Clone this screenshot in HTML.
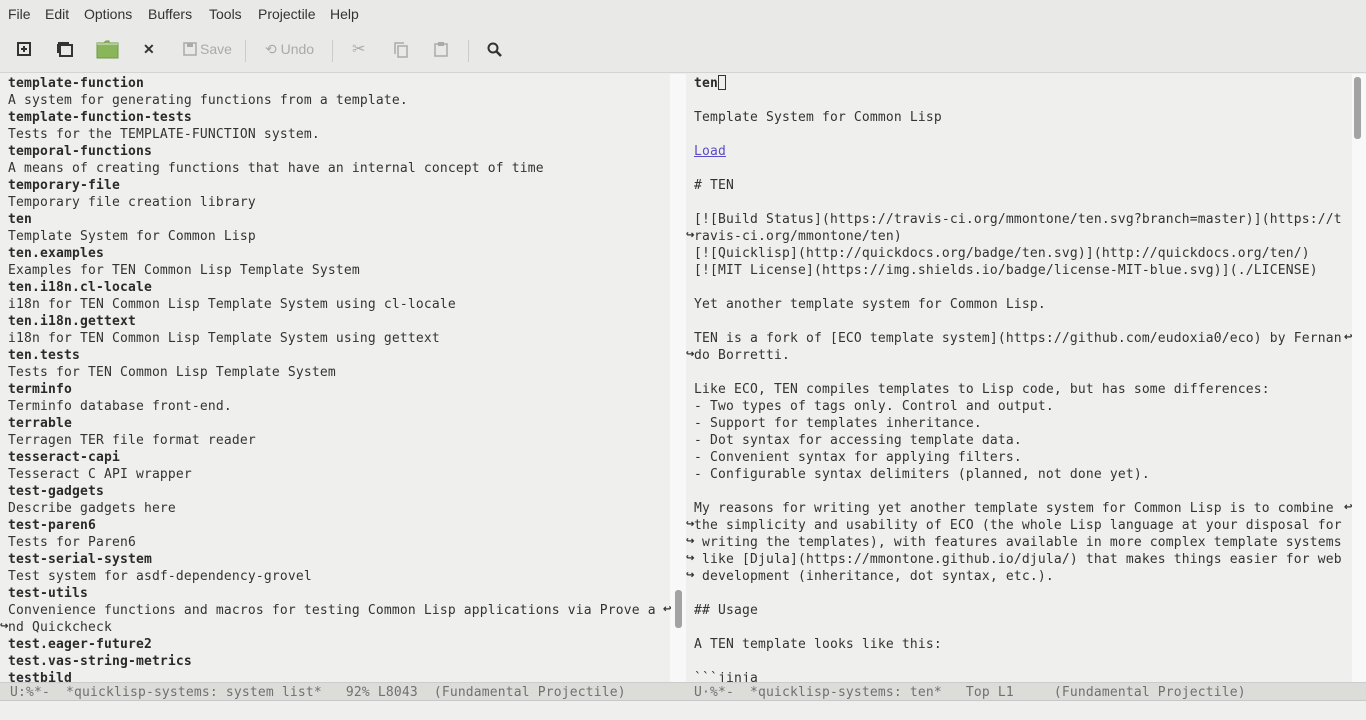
<!DOCTYPE html>
<html><head><meta charset="utf-8"><style>
*{margin:0;padding:0;box-sizing:border-box}
body{width:1366px;height:720px;overflow:hidden;background:#efefee;font-family:"Liberation Sans",sans-serif;position:relative}
#menu{position:absolute;left:0;top:0;width:1366px;height:28px;background:#e9e9e8;font-size:14px;color:#333}
#menu span{position:absolute;top:6px}
#tool{position:absolute;left:0;top:28px;width:1366px;height:45px;background:#e9e9e8;border-bottom:1px solid #d4d4d3}
.ic{position:absolute;top:13px;color:#333;font-size:14px}
.dis{color:#aaa}
.sep{position:absolute;top:12px;width:1px;height:22px;background:#ccc}
.pane{position:absolute;top:74px;height:608px;padding-top:1px;font-family:"DejaVu Sans Mono","Liberation Mono",monospace;font-size:13px;letter-spacing:0.17px;line-height:17px;color:#333;white-space:pre;overflow:hidden}
b{font-weight:bold;color:#2a2a2a}
#l{left:0;width:670px;padding-left:8px;background:#efefee}
#r{left:686px;width:666px;padding-left:8px;background:#efefee}
#div{position:absolute;left:670px;top:74px;width:16px;height:608px;background:#f8f8f8}
#rs{position:absolute;left:1352px;top:74px;width:14px;height:608px;background:#f8f8f8}
.thumb{position:absolute;background:#a3a3a3;border-radius:3px}
.ml{position:absolute;top:682px;height:19px;padding-top:1px;background:#dcdcd9;border-top:1px solid #ccc;border-bottom:1px solid #c8c8c8;font-family:"DejaVu Sans Mono",monospace;font-size:13px;letter-spacing:0.17px;line-height:17px;color:#707070;white-space:pre;padding-left:10px;z-index:2}
.fr{color:#333;font-size:10px;font-weight:bold;position:absolute;z-index:3;line-height:17px}
a{color:#5b4dc4;text-decoration:underline}
</style></head><body>
<div id="menu"><span style="left:8px">File</span><span style="left:45px">Edit</span><span style="left:84px">Options</span><span style="left:148px">Buffers</span><span style="left:209px">Tools</span><span style="left:258px">Projectile</span><span style="left:330px">Help</span></div>
<div id="tool">
<svg style="position:absolute;left:17px;top:14px" width="14" height="14"><rect x="1" y="1" width="12" height="12" fill="none" stroke="#333" stroke-width="2"/><path d="M7 4v6M4 7h6" stroke="#333" stroke-width="2"/></svg>
<svg style="position:absolute;left:57px;top:13px" width="16" height="16"><rect x="1" y="1" width="11" height="3" fill="#333"/><rect x="3" y="4" width="12" height="11" fill="none" stroke="#333" stroke-width="2"/><rect x="0" y="3" width="2" height="9" fill="#333"/></svg>
<svg style="position:absolute;left:96px;top:12px" width="23" height="19"><path d="M1 3h7l2-2h3v2h9v15H1z" fill="#8ab65a" stroke="#6f9a45"/><path d="M1 4h21" stroke="#e8e8e8"/></svg>
<span class="ic" style="left:143px;font-weight:bold">✕</span>
<svg style="position:absolute;left:183px;top:14px" width="14" height="14"><rect x="1" y="1" width="12" height="12" fill="none" stroke="#aaa" stroke-width="1.5"/><rect x="4" y="1" width="6" height="4" fill="#aaa"/></svg>
<span class="ic dis" style="left:200px">Save</span>
<div class="sep" style="left:245px"></div>
<span class="ic dis" style="left:265px">⟲ Undo</span>
<div class="sep" style="left:332px"></div>
<span class="ic dis" style="left:352px;font-size:16px;top:11px">✂</span>
<svg style="position:absolute;left:394px;top:14px" width="14" height="16"><rect x="4" y="4" width="9" height="11" fill="none" stroke="#aaa" stroke-width="1.5"/><path d="M1 12V1h9" fill="none" stroke="#aaa" stroke-width="1.5"/></svg>
<svg style="position:absolute;left:434px;top:13px" width="14" height="16"><rect x="1" y="3" width="12" height="12" fill="none" stroke="#aaa" stroke-width="1.5"/><rect x="4" y="1" width="6" height="4" fill="#aaa"/></svg>
<div class="sep" style="left:468px"></div>
<svg style="position:absolute;left:487px;top:14px" width="15" height="15"><circle cx="6" cy="6" r="4.5" fill="none" stroke="#333" stroke-width="2"/><path d="M9 9l5 5" stroke="#333" stroke-width="2.5"/></svg>
</div>
<div id="l" class="pane"><b>template-function</b>
A system for generating functions from a template.
<b>template-function-tests</b>
Tests for the TEMPLATE-FUNCTION system.
<b>temporal-functions</b>
A means of creating functions that have an internal concept of time
<b>temporary-file</b>
Temporary file creation library
<b>ten</b>
Template System for Common Lisp
<b>ten.examples</b>
Examples for TEN Common Lisp Template System
<b>ten.i18n.cl-locale</b>
i18n for TEN Common Lisp Template System using cl-locale
<b>ten.i18n.gettext</b>
i18n for TEN Common Lisp Template System using gettext
<b>ten.tests</b>
Tests for TEN Common Lisp Template System
<b>terminfo</b>
Terminfo database front-end.
<b>terrable</b>
Terragen TER file format reader
<b>tesseract-capi</b>
Tesseract C API wrapper
<b>test-gadgets</b>
Describe gadgets here
<b>test-paren6</b>
Tests for Paren6
<b>test-serial-system</b>
Test system for asdf-dependency-grovel
<b>test-utils</b>
Convenience functions and macros for testing Common Lisp applications via Prove a
nd Quickcheck
<b>test.eager-future2</b>
<b>test.vas-string-metrics</b>
<b>testbild</b></div>
<div id="div"><div class="thumb" style="left:5px;top:516px;width:7px;height:38px"></div></div>
<div id="r" class="pane"><b>ten</b><span style="display:inline-block;width:8px;height:15px;border:1px solid #333;vertical-align:-3px"></span>

Template System for Common Lisp

<a>Load</a>

# TEN

[![Build Status](https://travis-ci.org/mmontone/ten.svg?branch=master)](https://t
ravis-ci.org/mmontone/ten)
[![Quicklisp](http://quickdocs.org/badge/ten.svg)](http://quickdocs.org/ten/)
[![MIT License](https://img.shields.io/badge/license-MIT-blue.svg)](./LICENSE)

Yet another template system for Common Lisp.

TEN is a fork of [ECO template system](https://github.com/eudoxia0/eco) by Fernan
do Borretti.

Like ECO, TEN compiles templates to Lisp code, but has some differences:
- Two types of tags only. Control and output.
- Support for templates inheritance.
- Dot syntax for accessing template data.
- Convenient syntax for applying filters.
- Configurable syntax delimiters (planned, not done yet).

My reasons for writing yet another template system for Common Lisp is to combine 
the simplicity and usability of ECO (the whole Lisp language at your disposal for
 writing the templates), with features available in more complex template systems
 like [Djula](https://mmontone.github.io/djula/) that makes things easier for web
 development (inheritance, dot syntax, etc.).

## Usage

A TEN template looks like this:

&#96;&#96;&#96;jinja</div>
<div id="rs"><div class="thumb" style="left:2px;top:3px;width:7px;height:62px"></div></div>
<span class="fr" style="left:663px;top:601px">↩</span>
<span class="fr" style="left:0;top:618px">↪</span>
<span class="fr" style="left:686px;top:227px">↪</span>
<span class="fr" style="left:1344px;top:329px">↩</span>
<span class="fr" style="left:686px;top:346px">↪</span>
<span class="fr" style="left:1344px;top:499px">↩</span>
<span class="fr" style="left:686px;top:516px">↪</span>
<span class="fr" style="left:686px;top:533px">↪</span>
<span class="fr" style="left:686px;top:550px">↪</span>
<span class="fr" style="left:686px;top:567px">↪</span>
<div class="ml" style="left:0;width:684px">U:%*-  *quicklisp-systems: system list*   92% L8043  (Fundamental Projectile)</div>
<div class="ml" style="left:684px;width:682px">U·%*-  *quicklisp-systems: ten*   Top L1     (Fundamental Projectile)</div>
</body></html>
